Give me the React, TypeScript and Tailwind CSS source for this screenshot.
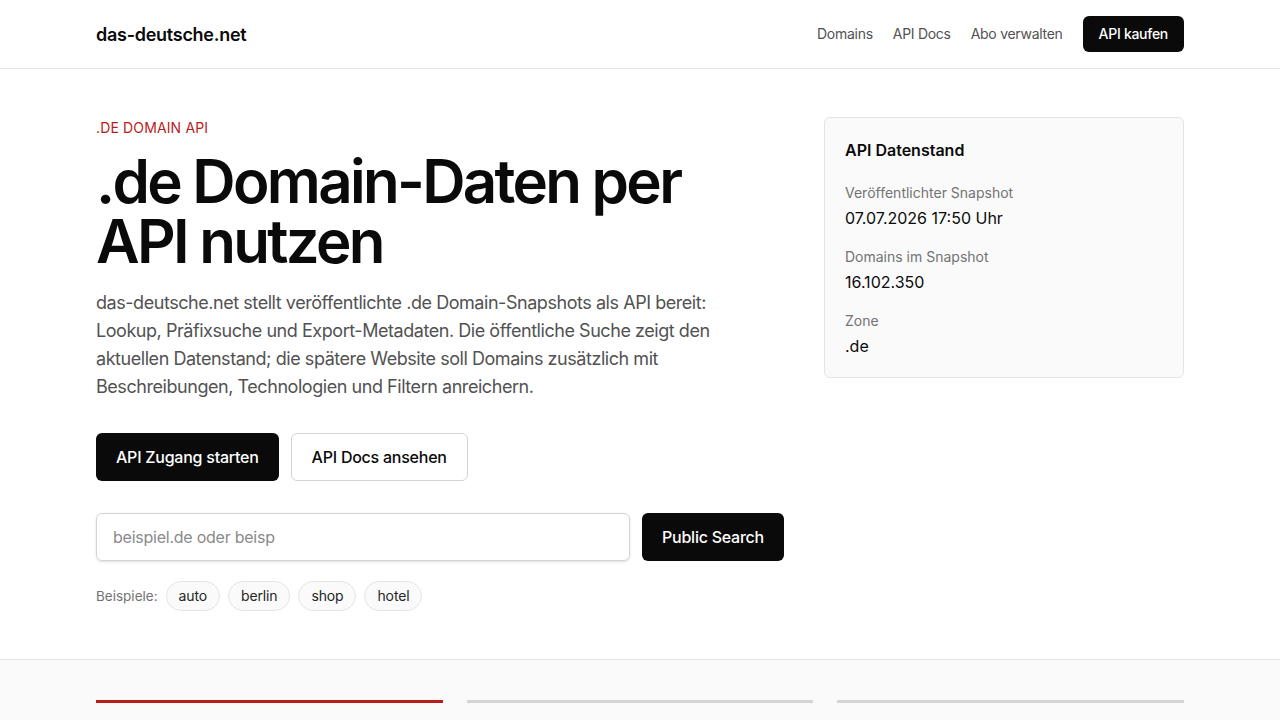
import React from 'react'

const stats = [
  { label: 'Veröffentlichter Snapshot', value: '07.07.2026 17:50 Uhr' },
  { label: 'Domains im Snapshot', value: '16.102.350' },
  { label: 'Zone', value: '.de' },
]

const examples = ['auto', 'berlin', 'shop', 'hotel']

export default function App() {
  return (
    <div className="min-h-screen bg-white text-[#0a0a0a]" style={{ fontFamily: 'Inter, "Noto Sans", sans-serif' }}>
      <header className="border-b border-[#e5e5e5]">
        <div className="w-[1088px] mx-auto h-[68px] flex items-center justify-between">
          <a className="text-[18px] font-semibold tracking-[-0.015em]">das-deutsche.net</a>
          <nav className="flex items-center gap-5 text-sm text-[#525252] tracking-[-0.02em]">
            <a>Domains</a>
            <a>API Docs</a>
            <a>Abo verwalten</a>
            <button className="h-9 px-4 rounded-md bg-[#0a0a0a] text-white text-sm font-medium">API kaufen</button>
          </nav>
        </div>
      </header>

      <main>
        <section className="w-[1088px] mx-auto grid grid-cols-[688px_360px] gap-10 pt-[117px] pb-12 -mt-[68px]">
          <div>
            <p className="text-sm uppercase tracking-[0.01em] text-[#b91c1c] leading-5">.de Domain API</p>
            <h1 className="mt-[13px] text-[60px] leading-[60px] font-semibold tracking-[-0.045em]">
              .de Domain-Daten per
              <br />
              API nutzen
            </h1>
            <p className="mt-[18px] text-lg leading-7 text-[#525252] max-w-[620px] tracking-[-0.025em]">
              das-deutsche.net stellt veröffentlichte .de Domain-Snapshots als API bereit: Lookup, Präfixsuche und
              Export-Metadaten. Die öffentliche Suche zeigt den aktuellen Datenstand; die spätere Website soll Domains
              zusätzlich mit Beschreibungen, Technologien und Filtern anreichern.
            </p>
            <div className="mt-8 flex gap-3 tracking-[-0.015em]">
              <button className="h-12 px-5 rounded-md bg-[#0a0a0a] text-white text-base font-medium">API Zugang starten</button>
              <button className="h-12 px-5 rounded-md border border-[#d4d4d4] bg-white text-base font-medium">API Docs ansehen</button>
            </div>
            <form className="mt-8 flex gap-3 tracking-[-0.015em]">
              <input
                className="flex-1 h-12 px-4 rounded-md border border-[#d4d4d4] shadow-sm text-base placeholder:text-[#8a8a8a] outline-none"
                placeholder="beispiel.de oder beisp"
              />
              <button type="button" className="h-12 px-5 rounded-md bg-[#0a0a0a] text-white text-base font-medium">
                Public Search
              </button>
            </form>
            <div className="mt-5 flex items-center gap-2">
              <span className="text-[13.5px] text-[#737373]">Beispiele:</span>
              {examples.map((e) => (
                <button
                  key={e}
                  className="h-[30px] px-3 rounded-full border border-[#e5e5e5] bg-[#fafafa] text-sm text-[#262626] tracking-[-0.01em]"
                >
                  {e}
                </button>
              ))}
            </div>
          </div>

          <aside className="self-start -mt-px rounded-md border border-[#e5e5e5] bg-[#fafafa] px-5 pt-5 pb-[19px]">
            <h2 className="text-base font-semibold leading-6">API Datenstand</h2>
            <dl className="mt-[21px] flex flex-col gap-[17px]">
              {stats.map((s) => (
                <div key={s.label}>
                  <dt className="text-sm leading-5 text-[#737373]">{s.label}</dt>
                  <dd className="mt-[3px] text-base font-normal leading-6">{s.value}</dd>
                </div>
              ))}
            </dl>
          </aside>
        </section>

        <section className="border-t border-[#e5e5e5] bg-[#fafafa] pt-10 pb-16">
          <div className="w-[1088px] mx-auto grid grid-cols-3 gap-6">
            <div className="h-[3px] bg-[#b91c1c]" />
            <div className="h-[3px] bg-[#d4d4d4]" />
            <div className="h-[3px] bg-[#d4d4d4]" />
          </div>
        </section>
      </main>
    </div>
  )
}
